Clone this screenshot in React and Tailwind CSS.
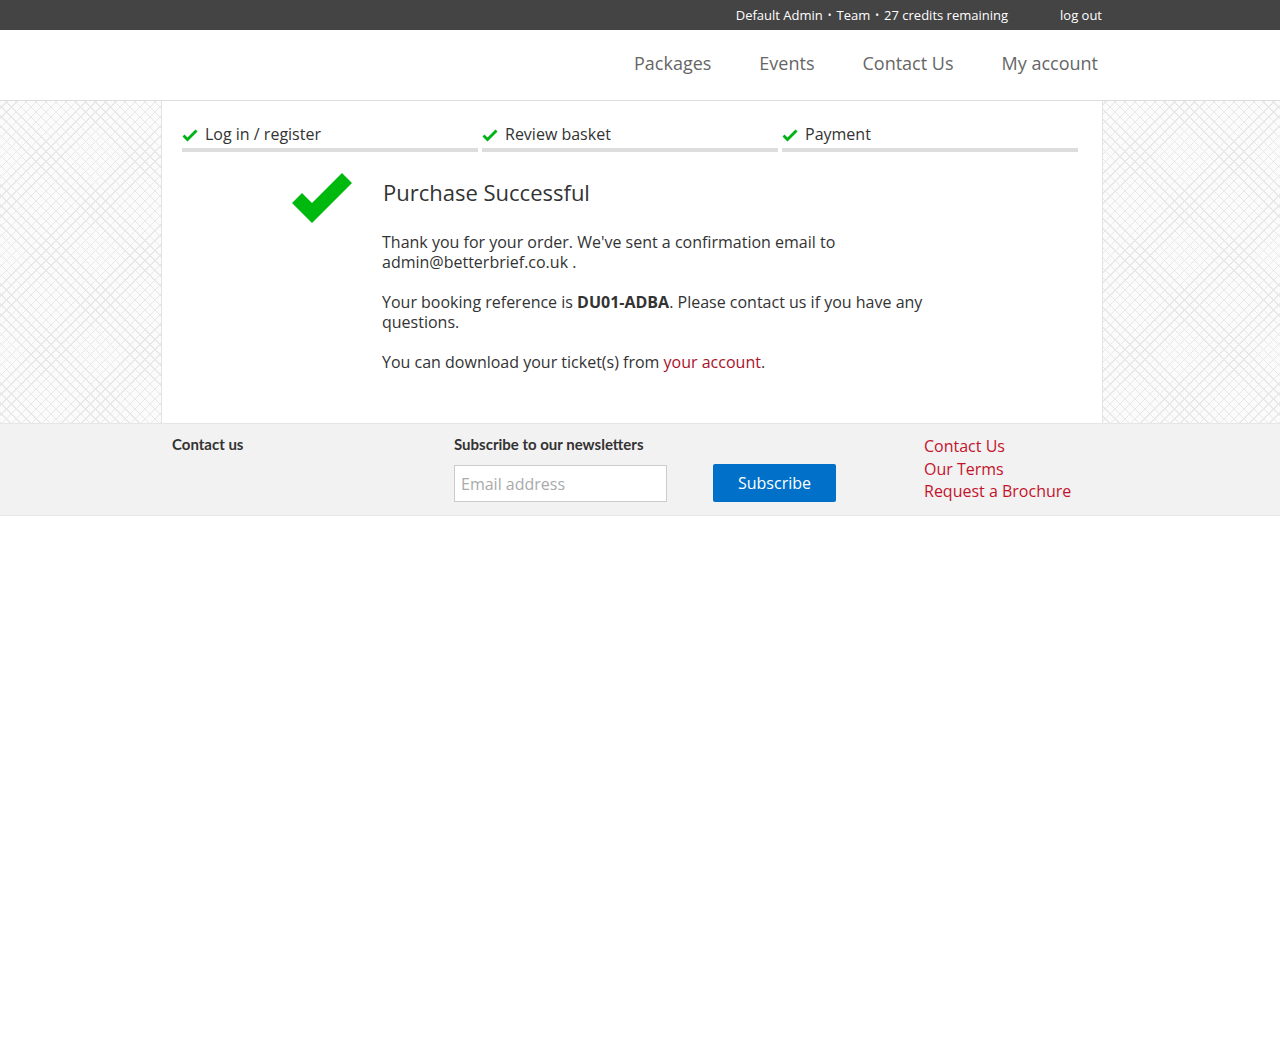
import React from "react";

const Check = ({ className }) => (
  <svg viewBox="0 0 16 12" className={className}>
    <path d="M0.5 6.5 L2.5 4.5 L5.5 7.5 L13.5 -0.5 L15.5 1.5 L5.5 11.5 Z" fill="#00b415" transform="translate(0,0.5)" />
  </svg>
);

const BigCheck = () => (
  <svg viewBox="0 0 60 50" className="w-[60px] h-[50px]">
    <path d="M0 30 L10 20 L20 30 L50 0 L60 10 L20 50 Z" fill="#00b90f" />
  </svg>
);

const pattern =
  "bg-[repeating-linear-gradient(45deg,#e8e8e8_0px,#e8e8e8_1px,transparent_1px,transparent_7px),repeating-linear-gradient(-45deg,#e8e8e8_0px,#e8e8e8_1px,transparent_1px,transparent_7px)] bg-[#fbfbfb]";

export default function App() {
  return (
    <div className="font-['Open_Sans',sans-serif] text-[#333] bg-white min-h-[1050px]">
      {/* top bar */}
      <div className="bg-[#444] h-[30px]">
        <div className="w-[940px] ml-[calc(50%-478px)] h-full flex items-center justify-end pt-[1px] text-[13px] text-white">
          <span>Default Admin</span>
          <span className="mx-[5px] text-[10px]">•</span>
          <span>Team</span>
          <span className="mx-[5px] text-[10px]">•</span>
          <span>27 credits remaining</span>
          <span className="ml-[52px]">log out</span>
        </div>
      </div>
      {/* header */}
      <div className="h-[71px] border-b border-[#ddd] bg-white">
        <div className="w-[940px] ml-[calc(50%-478px)] h-full flex items-center justify-end pr-[4px] pb-[3px] text-[18px] text-[#666] gap-[48px]">
          <span>Packages</span>
          <span>Events</span>
          <span>Contact Us</span>
          <span>My account</span>
        </div>
      </div>
      {/* main */}
      <div className={pattern}>
        <div className="w-[942px] ml-[calc(50%-479px)] bg-white border-x border-[#e4e4e4] pl-[20px] pr-[18px] pt-[21px] pb-[51px]">
          <div className="flex gap-[4px] w-[896px]">
            {["Log in / register", "Review basket", "Payment"].map((s) => (
              <div key={s} className="flex-1 border-b-[4px] border-[#ddd] pb-[2px]">
                <div className="flex items-center text-[16px] h-[24px]">
                  <Check className="w-[16px] h-[13px] mr-[7px] mt-[3px]" />
                  <span>{s}</span>
                </div>
              </div>
            ))}
          </div>
          <div className="flex mt-[20px]">
            <div className="w-[200px] flex justify-end pr-[30px] pt-[1px]">
              <BigCheck />
            </div>
            <div className="w-[560px]">
              <h1 className="text-[22px] leading-[30px] mt-[5px] ml-[1px] text-[#333]">Purchase Successful</h1>
              <div className="mt-[25px] text-[16px] leading-[20px]">
                <p>Thank you for your order. We've sent a confirmation email to admin@betterbrief.co.uk .</p>
                <p className="mt-[20px]">
                  Your booking reference is <b>DU01-ADBA</b>. Please contact us if you have any questions.
                </p>
                <p className="mt-[20px]">
                  You can download your ticket(s) from <span className="text-[#a8122a]">your account</span>.
                </p>
              </div>
            </div>
          </div>
        </div>
      </div>
      {/* footer */}
      <div className="bg-[#f2f2f2] border-y border-[#e6e6e6] h-[93px]">
        <div className="w-[940px] ml-[calc(50%-478px)] flex px-[10px] pt-[10px]">
          <div className="w-[282px] font-['Lato',sans-serif] font-bold text-[15px] leading-[18px] mt-[1px]">Contact us</div>
          <div className="w-[470px]">
            <div className="font-['Lato',sans-serif] font-bold text-[15px] leading-[18px] mt-[1px]">Subscribe to our newsletters</div>
            <div className="flex items-end mt-[11px]">
              <div className="w-[213px] h-[37px] border border-[#ccc] bg-white flex items-center px-[6px] text-[16px] text-[#aaa]">
                Email address
              </div>
              <div className="ml-[46px] w-[123px] h-[38px] bg-[#0070c8] rounded-[2px] text-white text-[16px] flex items-center justify-center">
                Subscribe
              </div>
            </div>
          </div>
          <div className="text-[16px] leading-[22.5px] text-[#c4122c] mt-[1px]">
            <div>Contact Us</div>
            <div>Our Terms</div>
            <div>Request a Brochure</div>
          </div>
        </div>
      </div>
    </div>
  );
}
